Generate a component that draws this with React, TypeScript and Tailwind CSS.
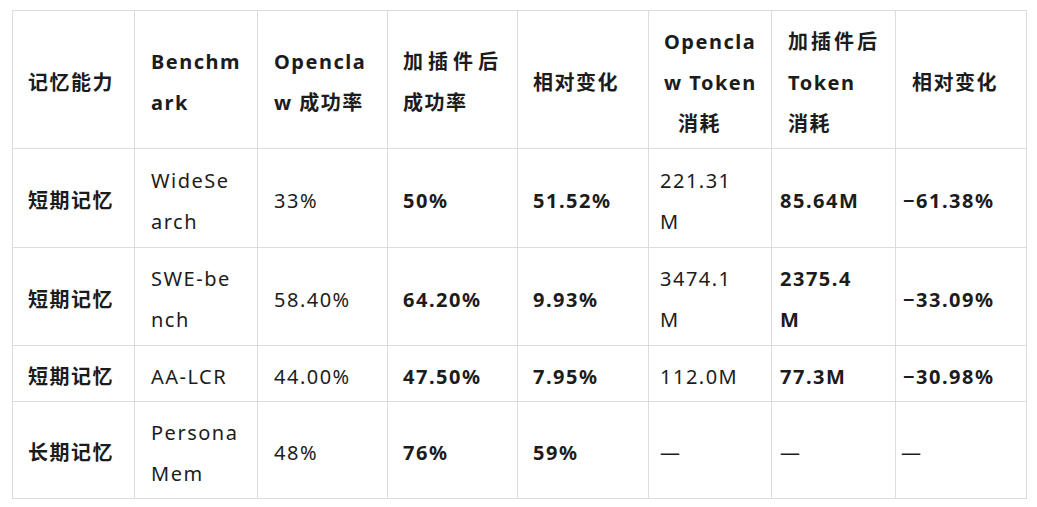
import React from "react";

const cell = "border border-[#dcdcdc] align-middle pt-[5px] pb-0 whitespace-nowrap";

type Row = {
  h: string;
  cells: { c: React.ReactNode; b?: boolean; pl: string }[];
};

const rows: Row[] = [
  {
    h: "h-[99px]",
    cells: [
      { c: "短期记忆", b: true, pl: "pl-[15px]" },
      { c: <>WideSe<br />arch</>, pl: "pl-[16px]" },
      { c: "33%", pl: "pl-[16px]" },
      { c: "50%", b: true, pl: "pl-[15px]" },
      { c: "51.52%", b: true, pl: "pl-[15px]" },
      { c: <>221.31<br />M</>, pl: "pl-[11px]" },
      { c: "85.64M", b: true, pl: "pl-[8px]" },
      { c: "−61.38%", b: true, pl: "pl-[7px]" },
    ],
  },
  {
    h: "h-[98px]",
    cells: [
      { c: "短期记忆", b: true, pl: "pl-[15px]" },
      { c: <>SWE-be<br />nch</>, pl: "pl-[16px]" },
      { c: "58.40%", pl: "pl-[16px]" },
      { c: "64.20%", b: true, pl: "pl-[15px]" },
      { c: "9.93%", b: true, pl: "pl-[15px]" },
      { c: <>3474.1<br />M</>, pl: "pl-[11px]" },
      { c: <>2375.4<br />M</>, b: true, pl: "pl-[8px]" },
      { c: "−33.09%", b: true, pl: "pl-[7px]" },
    ],
  },
  {
    h: "h-[56px]",
    cells: [
      { c: "短期记忆", b: true, pl: "pl-[15px]" },
      { c: "AA-LCR", pl: "pl-[16px]" },
      { c: "44.00%", pl: "pl-[16px]" },
      { c: "47.50%", b: true, pl: "pl-[15px]" },
      { c: "7.95%", b: true, pl: "pl-[15px]" },
      { c: "112.0M", pl: "pl-[11px]" },
      { c: "77.3M", b: true, pl: "pl-[8px]" },
      { c: "−30.98%", b: true, pl: "pl-[7px]" },
    ],
  },
  {
    h: "h-[97px]",
    cells: [
      { c: "长期记忆", b: true, pl: "pl-[15px]" },
      { c: <>Persona<br />Mem</>, pl: "pl-[16px]" },
      { c: "48%", pl: "pl-[16px]" },
      { c: "76%", b: true, pl: "pl-[15px]" },
      { c: "59%", b: true, pl: "pl-[15px]" },
      { c: "—", pl: "pl-[11px]" },
      { c: "—", pl: "pl-[8px]" },
      { c: "—", pl: "pl-[5px]" },
    ],
  },
];

const widths = [122, 123, 130, 130, 131, 123, 124, 131];

export default function App() {
  return (
    <div
      className="bg-white w-[1037px] h-[507px] pl-[12px] pt-[10px] text-[#1c1c1c] text-[20px] leading-[41px] tracking-[1.5px]"
      style={{ fontFamily: '"Noto Sans", "Noto Sans CJK SC", sans-serif' }}
    >
      <table className="border-collapse table-fixed w-[1015px]">
        <colgroup>
          {widths.map((w, i) => (
            <col key={i} style={{ width: w }} />
          ))}
        </colgroup>
        <thead>
          <tr className="h-[138px] font-bold">
            <th className={`${cell} text-left font-bold pl-[15px]`}>记忆能力</th>
            <th className={`${cell} text-left font-bold pl-[16px]`}>
              Benchm<br />ark
            </th>
            <th className={`${cell} text-left font-bold pl-[16px]`}>
              Opencla<br />w 成功率
            </th>
            <th className={`${cell} text-left font-bold pl-[15px]`}>
              <span className="tracking-[5px]">加插件后</span><br />成功率
            </th>
            <th className={`${cell} text-left font-bold pl-[15px]`}>相对变化</th>
            <th className={`${cell} text-left font-bold pl-[15px]`}>
              Opencla<br />w Token<br />
              <span className="pl-[14px]">消耗</span>
            </th>
            <th className={`${cell} text-left font-bold pl-[16px]`}>
              <span className="tracking-[3px]">加插件后</span><br />Token<br />消耗
            </th>
            <th className={`${cell} text-left font-bold pl-[16px]`}>相对变化</th>
          </tr>
        </thead>
        <tbody>
          {rows.map((r, i) => (
            <tr key={i} className={r.h}>
              {r.cells.map((c, j) => (
                <td key={j} className={`${cell} ${c.pl} ${c.b ? "font-bold" : "font-normal"}`}>
                  {c.c}
                </td>
              ))}
            </tr>
          ))}
        </tbody>
      </table>
    </div>
  );
}
